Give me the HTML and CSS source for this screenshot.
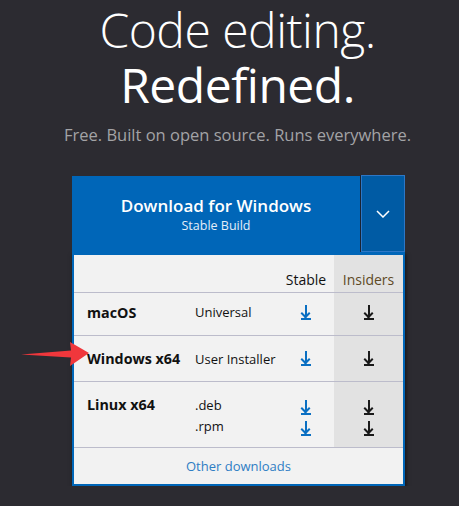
FILE: index.html
```html
<!DOCTYPE html>
<html lang="en">
<head>
  <meta charset="UTF-8" />
  <title>Visual Studio Code - Code Editing. Redefined</title>
  <link rel="stylesheet" href="styles.css">
</head>
<body>

<section class="hero">
  <h1><span class="light">Code editing.</span><br>Redefined.</h1>
  <p class="tagline">Free. Built on open source. Runs everywhere.</p>
</section>

<div class="download">
  <div class="download-top">
    <a class="main-btn" href="#">
      <span class="main-title">Download for Windows</span>
      <span class="main-sub">Stable Build</span>
    </a>
    <button class="drop-btn" aria-label="More downloads">
      <svg width="14" height="8" viewBox="0 0 14 8"><path d="M1 1l6 6 6-6" fill="none" stroke="#fff" stroke-width="1.5"/></svg>
    </button>
  </div>

  <div class="panel">
    <div class="row head">
      <div></div>
      <div></div>
      <div class="col-st">Stable</div>
      <div class="col-in">Insiders</div>
    </div>
    <div class="row mac">
      <div class="os">macOS</div>
      <div class="kind">Universal</div>
      <div class="col-st"><span class="dl blue"></span></div>
      <div class="col-in"><span class="dl"></span></div>
    </div>
    <div class="row win">
      <div class="os">Windows x64</div>
      <div class="kind">User Installer</div>
      <div class="col-st"><span class="dl blue"></span></div>
      <div class="col-in"><span class="dl"></span></div>
    </div>
    <div class="row linux">
      <div class="os">Linux x64</div>
      <div class="kind"><span>.deb</span><span>.rpm</span></div>
      <div class="col-st stack"><span class="dl blue"></span><span class="dl blue"></span></div>
      <div class="col-in stack"><span class="dl"></span><span class="dl"></span></div>
    </div>
    <div class="other"><a href="#">Other downloads</a></div>
  </div>

  <svg class="pointer" width="70" height="26" viewBox="0 0 70 26">
    <path d="M0 12.5 L50 8.5 L49 0 L68 11 L49 24 L50 15.5 Z" fill="#f0373c"/>
  </svg>
</div>

</body>
</html>
```

FILE: styles.css
```css
body {
  margin: 0;
  background: #2c2b31;
  font-family: 'Open Sans', 'Noto Sans', sans-serif;
  color: #fff;
}
.hero {
  text-align: center;
  padding: 2px 0 0 16px;
}
h1 {
  margin: 0;
  font-size: 48px;
  line-height: 55px;
  font-weight: 400;
  letter-spacing: -0.5px;
}
h1 .light {
  font-weight: 300;
}
.tagline {
  margin: 11px 0 0;
  font-size: 16.5px;
  color: #a3a3a6;
}
.download {
  position: relative;
  width: 333px;
  margin: 29px 0 0 72px;
}
.download-top {
  display: flex;
  height: 77px;
}
.main-btn {
  flex: 1;
  display: flex;
  flex-direction: column;
  align-items: center;
  justify-content: center;
  background: #0066b8;
  color: #fff;
  text-decoration: none;
  margin-top: 1px;
  margin-right: 1px;
  padding-top: 2px;
}
.main-title {
  font-size: 17px;
  font-weight: 600;
  line-height: 22px;
}
.main-sub {
  font-size: 12.5px;
  line-height: 18px;
  color: #e4eef8;
}
.drop-btn {
  width: 44px;
  border: 1px solid #2d77c6;
  background: #005ba4;
  padding: 0;
  display: flex;
  align-items: center;
  justify-content: center;
  box-shadow: -1px 0 0 #1b2330;
}
.panel {
  background: #f2f2f2;
  border: 2px solid #0066b8;
  border-top: 3px solid #0066b8;
  box-shadow: 1px 2px 4px rgba(0, 0, 0, 0.6);
  color: #111;
  font-size: 13px;
}
.row {
  display: grid;
  grid-template-columns: 121px 83px 56px 1fr;
}
.row > div {
  display: flex;
  align-items: center;
}
.row + .row {
  border-top: 1px solid #bcbccb;
}
.os {
  padding-left: 13px;
  font-weight: 700;
  font-size: 14.3px;
}
.col-st, .col-in {
  justify-content: center;
}
.col-in {
  background: #e2e2e2;
}
.head {
  height: 37px;
}
.head > div {
  align-items: flex-end;
  font-size: 14px;
  padding-bottom: 3px;
}
.head .col-in {
  color: #5e4a26;
}
.mac {
  height: 42px;
}
.mac > div {
  padding-bottom: 4px;
}
.win {
  height: 45px;
}
.linux {
  height: 65px;
}
.linux > div {
  align-items: flex-start;
  padding-top: 13px;
}
.linux .kind {
  flex-direction: column;
  align-items: flex-start;
  line-height: 21px;
  padding-top: 13px;
}
.stack {
  flex-direction: column;
  gap: 6px;
}
.linux .col-st, .linux .col-in {
  align-items: center;
  padding-top: 7px;
}
.dl {
  display: block;
  width: 10px;
  height: 15px;
  background:
    linear-gradient(currentColor, currentColor) 4px 0 / 2px 11px no-repeat,
    linear-gradient(currentColor, currentColor) 0 13px / 10px 2px no-repeat;
  color: #1a1a1a;
  position: relative;
}
.dl::after {
  content: "";
  position: absolute;
  left: 1px;
  top: 5px;
  width: 5px;
  height: 5px;
  border-right: 2px solid currentColor;
  border-bottom: 2px solid currentColor;
  transform: rotate(45deg);
}
.dl.blue {
  color: #0a6fc2;
}
.other {
  border-top: 1px solid #bcbccb;
  height: 36px;
  display: flex;
  align-items: center;
  justify-content: center;
}
.other a {
  color: #2f7dc4;
  text-decoration: none;
  font-size: 13px;
}
.pointer {
  position: absolute;
  left: -51px;
  top: 167px;
}
```
